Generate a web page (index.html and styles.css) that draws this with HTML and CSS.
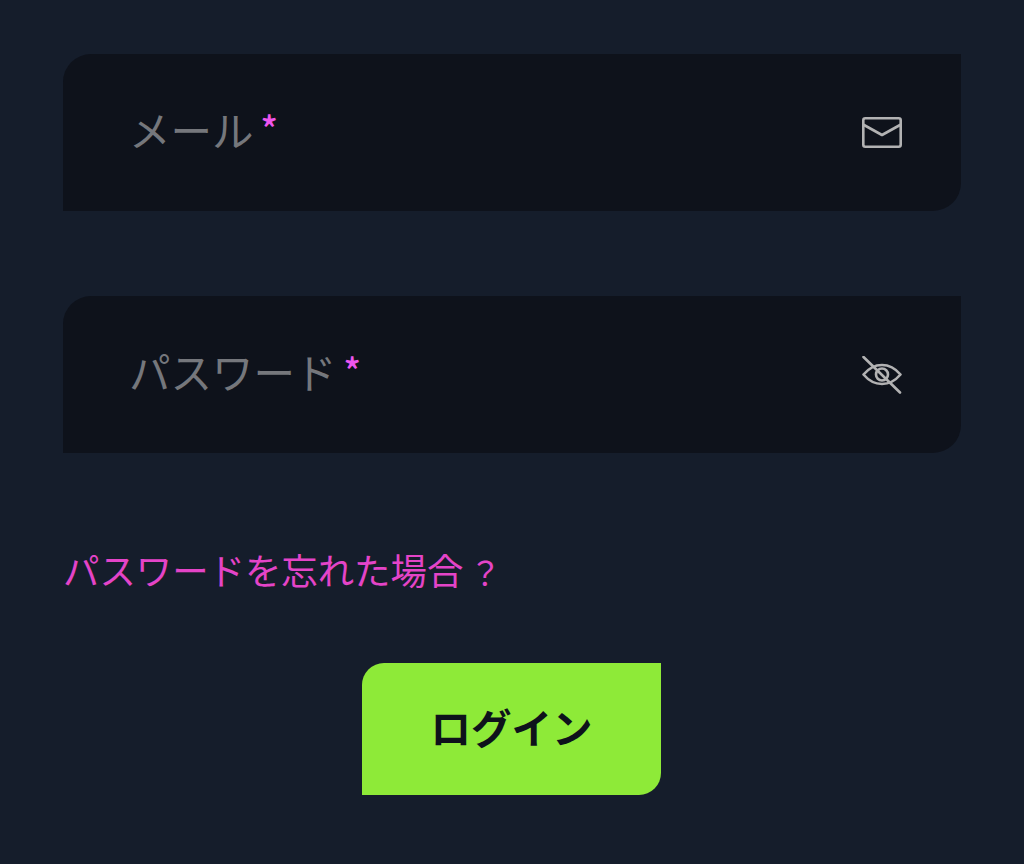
FILE: index.html
```html
<!DOCTYPE html>
<html lang="ja">
<head>
<meta charset="utf-8">
<title>ログイン</title>
<link rel="stylesheet" href="styles.css">
</head>
<body>
<form class="form">
  <div class="field">
    <span class="label">メール<span class="req">*</span></span>
    <svg class="icon" viewBox="0 0 40 32" fill="none" stroke="currentColor" stroke-width="2.6" stroke-linejoin="round" stroke-linecap="round">
      <rect x="1.3" y="1.3" width="37.4" height="28.4" rx="2"/>
      <path d="M2 8 L20 18 L38 8"/>
    </svg>
  </div>
  <div class="field">
    <span class="label">パスワード<span class="req">*</span></span>
    <svg class="icon" viewBox="0 0 40 38" fill="none" stroke="currentColor" stroke-width="2.6" stroke-linejoin="round" stroke-linecap="round">
      <path d="M1.5 18.5 C7 12 13 9 20 9 C27 9 33 12 38.5 18.5 C33 25 27 28 20 28 C13 28 7 25 1.5 18.5 Z"/>
      <circle cx="20" cy="18.5" r="6"/>
      <path d="M1.5 1 L38 36.5"/>
    </svg>
  </div>
  <a class="forgot" href="#">パスワードを忘れた場合<span class="qm">？</span></a>
  <div class="actions"><button class="login" type="button">ログイン</button></div>
</form>
</body>
</html>
```
FILE: styles.css
```css
* { box-sizing: border-box; }
html, body { margin: 0; height: 864px; overflow: hidden; }
body {
  background: #151d2b;
  font-family: "Noto Sans CJK JP", "Liberation Sans", sans-serif;
  padding: 54px 63px 0;
}
.form { display: flex; flex-direction: column; width: 898px; }
.field {
  height: 157px;
  margin-bottom: 85px;
  padding: 0 59px 0 66px;
  display: flex;
  align-items: center;
  justify-content: space-between;
  background: #0e121b;
  border-radius: 28px 0 28px 0;
}
.label { font-size: 41.5px; line-height: 1; color: #75777c; display: flex; align-items: flex-start; margin-bottom: 5px; }
.req { font-size: 36px; line-height: 1; font-weight: 500; color: #ee55ee; margin-left: 7px; }
.icon { width: 40px; color: #b2b2b3; display: block; }
.forgot {
  margin-top: 5px;
  font-size: 36.4px;
  line-height: 52px;
  color: #e444c8;
  text-decoration: none;
  display: block;
}
.qm { font-size: 32px; margin-left: 6px; }
.actions { display: flex; justify-content: center; margin-top: 66px; padding-right: 1px; }
.login {
  width: 299px;
  height: 132px;
  border: 0;
  padding: 0 0 6px;
  background: #8eea38;
  color: #0e121b;
  font-family: inherit;
  font-size: 40.5px;
  font-weight: 700;
  border-radius: 22px 0 22px 0;
}
```
